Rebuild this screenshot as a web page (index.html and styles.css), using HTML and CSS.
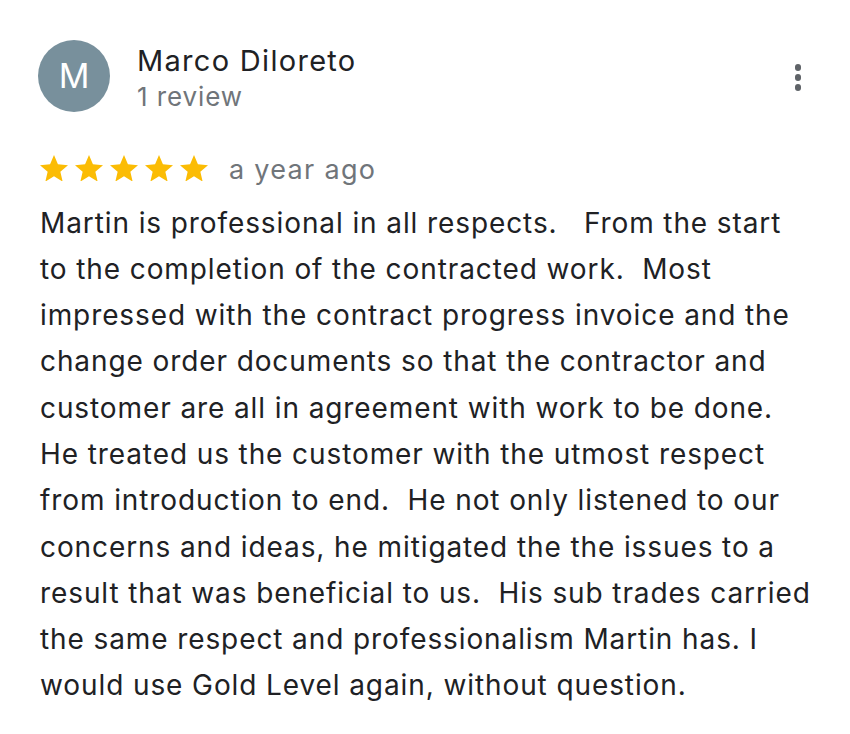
FILE: index.html
```html
<!DOCTYPE html>
<html>
<head>
<meta charset="utf-8">
<link rel="stylesheet" href="styles.css">
</head>
<body>
<div class="review">
  <div class="header">
    <div class="avatar">M</div>
    <div class="who">
      <div class="name">Marco Diloreto</div>
      <div class="count">1 review</div>
    </div>
    <div class="more"><span></span><span></span><span></span></div>
  </div>
  <div class="meta">
    <div class="stars">
      <svg class="star" viewBox="2 2 20 19"><path d="M12 17.27L18.18 21l-1.64-7.03L22 9.24l-7.19-.61L12 2 9.19 8.63 2 9.24l5.46 4.73L5.82 21z"/></svg>
      <svg class="star" viewBox="2 2 20 19"><path d="M12 17.27L18.18 21l-1.64-7.03L22 9.24l-7.19-.61L12 2 9.19 8.63 2 9.24l5.46 4.73L5.82 21z"/></svg>
      <svg class="star" viewBox="2 2 20 19"><path d="M12 17.27L18.18 21l-1.64-7.03L22 9.24l-7.19-.61L12 2 9.19 8.63 2 9.24l5.46 4.73L5.82 21z"/></svg>
      <svg class="star" viewBox="2 2 20 19"><path d="M12 17.27L18.18 21l-1.64-7.03L22 9.24l-7.19-.61L12 2 9.19 8.63 2 9.24l5.46 4.73L5.82 21z"/></svg>
      <svg class="star" viewBox="2 2 20 19"><path d="M12 17.27L18.18 21l-1.64-7.03L22 9.24l-7.19-.61L12 2 9.19 8.63 2 9.24l5.46 4.73L5.82 21z"/></svg>
    </div>
    <span class="date">a year ago</span>
  </div>
  <p class="text">Martin is professional in all respects.&nbsp;&nbsp; From the start<br>to the completion of the contracted work.&nbsp; Most<br>impressed with the contract progress invoice and the<br>change order documents so that the contractor and<br>customer are all in agreement with work to be done.<br>He treated us the customer with the utmost respect<br>from introduction to end.&nbsp; He not only listened to our<br>concerns and ideas, he mitigated the the issues to a<br>result that was beneficial to us.&nbsp; His sub trades carried<br>the same respect and professionalism Martin has. I<br>would use Gold Level again, without question.</p>
</div>
</body>
</html>
```
FILE: styles.css
```css
html, body {
  margin: 0;
  padding: 0;
  background: #ffffff;
}
body {
  font-family: Inter, Roboto, "Liberation Sans", Arial, sans-serif;
  color: #202124;
}
.review {
  padding: 40px 20px 0 40px;
}
.header {
  display: flex;
  align-items: flex-start;
  margin-left: -2px;
}
.avatar {
  width: 72px;
  height: 72px;
  border-radius: 50%;
  background: #78909c;
  color: #ffffff;
  font-size: 34px;
  line-height: 72px;
  text-align: center;
  flex: none;
}
.who {
  margin-left: 27px;
  padding-top: 2px;
}
.name {
  font-size: 29px;
  line-height: 38px;
  letter-spacing: 1.3px;
  color: #202124;
}
.count {
  font-size: 26px;
  line-height: 34px;
  letter-spacing: 0.9px;
  color: #70757a;
}
.more {
  margin-left: auto;
  margin-right: 29px;
  margin-top: 24px;
  display: flex;
  flex-direction: column;
  gap: 3.5px;
}
.more span {
  width: 6.5px;
  height: 6.5px;
  border-radius: 50%;
  background: #5f6368;
}
.meta {
  display: flex;
  align-items: center;
  margin-top: 38px;
  height: 34px;
}
.stars {
  display: flex;
  gap: 7px;
  margin-top: -2px;
}
.star {
  width: 28px;
  height: 26.6px;
  fill: #fbbc04;
}
.date {
  margin-left: 21px;
  font-size: 27px;
  letter-spacing: 1.3px;
  color: #70757a;
}
.text {
  margin: 13.5px 0 0 0;
  font-size: 28px;
  line-height: 46.3px;
  letter-spacing: 0.9px;
  color: #202124;
  white-space: nowrap;
}
```
